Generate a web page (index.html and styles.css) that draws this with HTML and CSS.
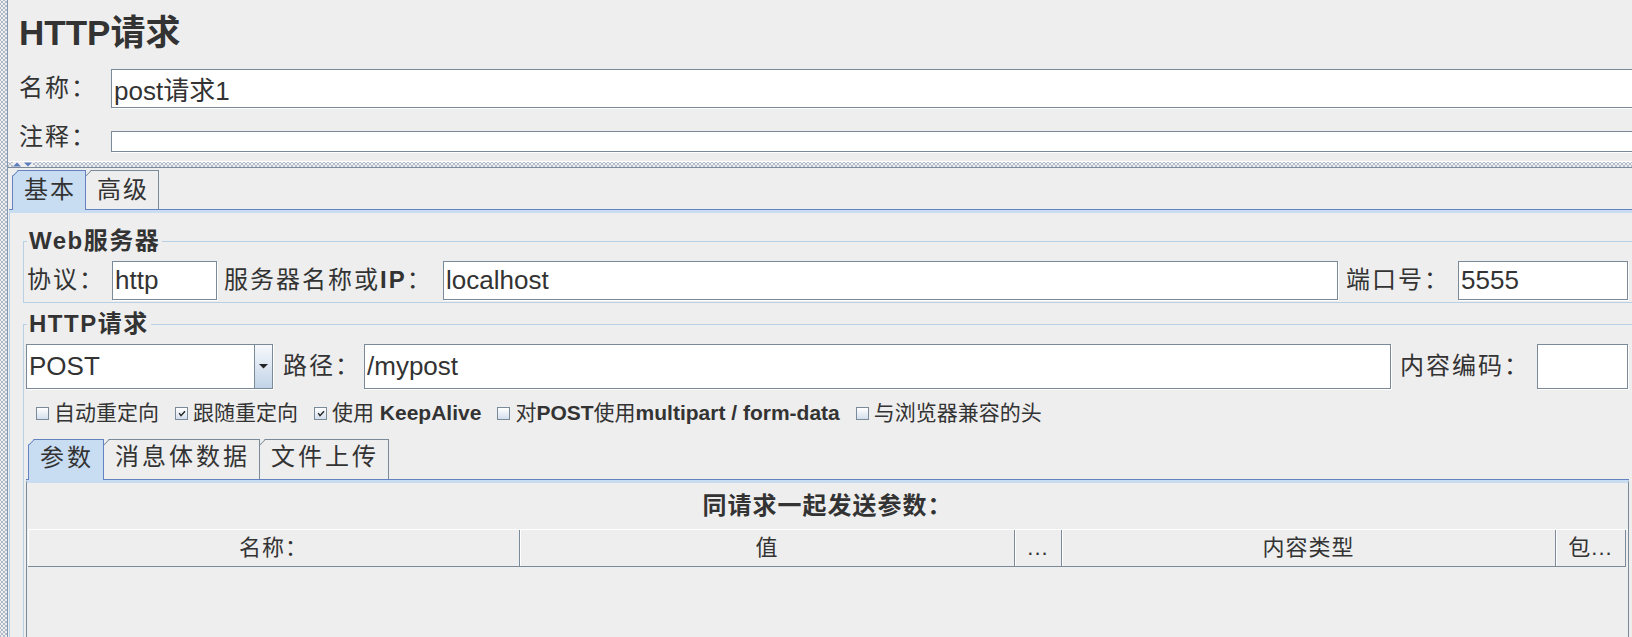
FILE: index.html
```html
<!DOCTYPE html>
<html lang="zh-CN">
<head>
<meta charset="utf-8">
<title>HTTP请求</title>
<link rel="stylesheet" href="styles.css">
</head>
<body>
<div class="app">
  <div class="vsplit"></div>
  <div class="main">
    <div class="head">
      <h1 class="title">HTTP请求</h1>
      <div class="frow name-row">
        <label class="flabel">名称：</label>
        <input class="tf tf-wide" value="post请求1">
      </div>
      <div class="frow comment-row">
        <label class="flabel flabel-up">注释：</label>
        <input class="tf tf-wide" value="">
      </div>
    </div>

    <div class="hsplit">
      <svg class="split-arrows" width="20" height="5" viewBox="0 0 20 5">
        <polygon points="0,4.5 4,0.5 8,4.5" fill="#5b7dbd"/>
        <polygon points="11,0.5 19,0.5 15,4.5" fill="#5b7dbd"/>
      </svg>
    </div>

    <div class="tabs outer-tabs">
      <div class="tab sel">基本</div>
      <div class="tab">高级</div>
    </div>

    <div class="tabpanel">
      <fieldset class="group">
        <legend class="legend">Web服务器</legend>
        <div class="frow row39">
          <span class="lbl w-proto">协议：</span>
          <input class="tf w-http" value="http">
          <span class="lbl w-server">服务器名称或<b class="b">IP</b>：</span>
          <input class="tf tf-wide" value="localhost">
          <span class="lbl w-port">端口号：</span>
          <input class="tf w-portin" value="5555">
        </div>
      </fieldset>

      <fieldset class="group group-http">
        <legend class="legend">HTTP请求</legend>
        <div class="frow row45">
          <div class="combo">
            <div class="combo-val">POST</div>
            <div class="combo-btn">
              <svg width="9" height="5" viewBox="0 0 9 5"><polygon points="0,0 9,0 4.5,4.5" fill="#222"/></svg>
            </div>
          </div>
          <span class="lbl w-path">路径：</span>
          <input class="tf tf-wide" value="/mypost">
          <span class="lbl w-enc">内容编码：</span>
          <input class="tf w-encin" value="">
        </div>

        <div class="checks">
          <span class="chk"><span class="box"></span><span class="chk-text">自动重定向</span></span>
          <span class="chk"><span class="box"><svg width="10" height="10" viewBox="0 0 10 10"><path d="M2.2 5.2 L4 7.6 L8 3.2" fill="none" stroke="#222" stroke-width="1.4"/></svg></span><span class="chk-text">跟随重定向</span></span>
          <span class="chk"><span class="box"><svg width="10" height="10" viewBox="0 0 10 10"><path d="M2.2 5.2 L4 7.6 L8 3.2" fill="none" stroke="#222" stroke-width="1.4"/></svg></span><span class="chk-text">使用 <b class="b">KeepAlive</b></span></span>
          <span class="chk"><span class="box"></span><span class="chk-text">对<b class="b">POST</b>使用<b class="b">multipart / form-data</b></span></span>
          <span class="chk"><span class="box"></span><span class="chk-text">与浏览器兼容的头</span></span>
        </div>

        <div class="tabs inner-tabs">
          <div class="tab sel">参数</div>
          <div class="tab">消息体数据</div>
          <div class="tab">文件上传</div>
        </div>

        <div class="ipanel">
          <div class="ptitle">同请求一起发送参数：</div>
          <div class="thead">
            <div class="th">名称：</div>
            <div class="th">值</div>
            <div class="th">...</div>
            <div class="th">内容类型</div>
            <div class="th">包...</div>
          </div>
        </div>
      </fieldset>
    </div>
  </div>
</div>
</body>
</html>
```

FILE: styles.css
```css
* { box-sizing: border-box; }

html, body {
  margin: 0;
  height: 100%;
  overflow: hidden;
  background: #eeeeee;
}

body {
  font-family: "Liberation Sans", "Noto Sans CJK SC", sans-serif;
  color: #333333;
  line-height: 1.2;
}

.app {
  display: flex;
  width: 1650px;
  height: 637px;
}

.vsplit {
  width: 8px;
  flex: none;
  border-right: 1px solid #8396b2;
  background-color: #eeeeee;
  background-image:
    radial-gradient(circle, #8d9db5 0.6px, transparent 0.9px),
    radial-gradient(circle, #8d9db5 0.6px, transparent 0.9px);
  background-size: 4px 4px;
  background-position: 0 0, 2px 2px;
}

.main {
  flex: 1;
  min-width: 0;
  display: flex;
  flex-direction: column;
}

/* ---------- header ---------- */
.head { padding-left: 11px; }

.title {
  margin: 14px 0 0;
  height: 38px;
  font-size: 35px;
  line-height: 38px;
  font-weight: 700;
  color: #333333;
}

.frow {
  display: flex;
  align-items: center;
}

.name-row { margin-top: 17px; height: 39px; }
.comment-row { margin-top: 23px; height: 21px; }

.flabel {
  width: 92px;
  flex: none;
  font-size: 24px;
  letter-spacing: 2px;
  white-space: nowrap;
}

.flabel-up { margin-bottom: 9px; }

.tf {
  height: 100%;
  margin: 0;
  padding: 0 0 0 2px;
  border: 1px solid #7a8a99;
  background: #ffffff;
  box-shadow: 1px 1px 0 #ffffff;
  font-family: "Liberation Sans", "Noto Sans CJK SC", sans-serif;
  font-size: 26px;
  color: #333333;
  outline: none;
  min-width: 0;
}

.tf-wide { flex: 1 1 0; width: 0; }

/* ---------- split divider ---------- */
.hsplit {
  margin-top: 9px;
  height: 10px;
  border-top: 1px solid #ffffff;
  border-bottom: 1px solid #7a8a99;
  padding-left: 5px;
  display: flex;
  align-items: center;
  background-color: #eeeeee;
  background-image:
    radial-gradient(circle, #95a4ba 0.6px, transparent 0.9px),
    radial-gradient(circle, #95a4ba 0.6px, transparent 0.9px);
  background-size: 4px 4px;
  background-position: 0 0, 2px 2px;
}

.split-arrows { display: block; background: #eeeeee; }

/* ---------- tabs ---------- */
.tabs {
  display: flex;
  align-items: flex-end;
  border-bottom: 1px solid #6382bf;
}

.outer-tabs {
  margin: 2px 0 0 1px;
  height: 40px;
  padding-left: 3px;
}

.inner-tabs {
  margin: 13px -1px 0 -1px;
  height: 41px;
  padding-left: 2px;
}

.tab {
  position: relative;
  height: 39px;
  padding: 0 9px 0 11px;
  display: flex;
  align-items: center;
  font-size: 24px;
  letter-spacing: 2px;
  white-space: nowrap;
  border: 1px solid #7a8a99;
  border-bottom: none;
  margin-right: -1px;
  clip-path: polygon(6px 0, 100% 0, 100% 100%, 0 100%, 0 6px);
}

.tab::before {
  content: "";
  position: absolute;
  left: -1px;
  top: 5px;
  width: 8.5px;
  height: 1px;
  background: #7a8a99;
  transform-origin: 0 0;
  transform: rotate(-45deg);
}

.tab.sel {
  background: #c8ddf2;
  border-color: #6382bf;
  height: 40px;
  margin-bottom: -1px;
  z-index: 1;
}

.tab.sel::before { background: #6382bf; }

.inner-tabs .tab {
  height: 40px;
  padding-bottom: 4px;
  letter-spacing: 3px;
}

.inner-tabs .tab.sel { height: 41px; }

.tabpanel {
  flex: 1;
  margin-left: 1px;
  border-top: 3px solid #c8ddf2;
  border-left: 1px solid #b8cfe5;
}

/* ---------- titled groups ---------- */
.group {
  min-inline-size: 0;
  margin: 15px 15px 0 13px;
  padding: 7px 6px 2px 3px;
  border: 1px solid #b8cfe5;
}

.group-http { margin-top: 8px; }

.legend {
  padding: 0 2px;
  font-size: 24px;
  line-height: 26px;
  font-weight: 700;
  letter-spacing: 1.5px;
  color: #333333;
}

.row39 { height: 39px; }
.row45 { height: 45px; }

.lbl {
  flex: none;
  font-size: 24px;
  letter-spacing: 2px;
  white-space: nowrap;
}

.b { font-weight: 700; }

.w-proto { width: 85px; }
.w-http { width: 105px; flex: none; }
.w-server { width: 219px; margin-left: 7px; }
.w-port { width: 112px; margin-left: 8px; }
.w-portin { width: 170px; flex: none; }
.w-path { width: 81px; margin-left: 10px; }
.w-enc { width: 137px; margin-left: 9px; }
.w-encin { width: 91px; flex: none; }

/* ---------- combo box ---------- */
.combo {
  width: 247px;
  height: 45px;
  flex: none;
  margin-left: -1px;
  display: flex;
  border: 1px solid #7a8a99;
  background: #ffffff;
  box-shadow: 1px 1px 0 #ffffff;
}

.combo-val {
  flex: 1;
  display: flex;
  align-items: center;
  padding-left: 2px;
  font-size: 26px;
}

.combo-btn {
  width: 18px;
  flex: none;
  border-left: 1px solid #7a8a99;
  background: linear-gradient(#f6f8fb, #dfe8f3 45%, #c2d3e7);
  display: flex;
  align-items: center;
  justify-content: center;
}

.combo-btn svg { display: block; }

/* ---------- checkboxes ---------- */
.checks {
  display: flex;
  align-items: center;
  height: 26px;
  margin-top: 11px;
  padding-left: 9px;
  font-size: 21px;
}

.chk {
  display: flex;
  align-items: center;
  margin-right: 16px;
  white-space: nowrap;
}

.chk-text { white-space: pre; }

.box {
  width: 13px;
  height: 13px;
  flex: none;
  margin-right: 5px;
  border: 1px solid #7a8a99;
  background: linear-gradient(#ffffff, #d3deec);
  display: flex;
  align-items: center;
  justify-content: center;
}

.box svg { display: block; }

/* ---------- inner panel ---------- */
.ipanel {
  margin: 0 -1px;
  height: 220px;
  border-top: 3px solid #c8ddf2;
  border-left: 1px solid #7a8a99;
  border-right: 1px solid #7a8a99;
}

.ptitle {
  height: 46px;
  line-height: 46px;
  text-align: center;
  font-size: 24px;
  font-weight: 700;
  letter-spacing: 1px;
}

.thead {
  display: grid;
  grid-template-columns: 492px 495px 47px 494px 70px;
  height: 38px;
  margin-left: 1px;
  border-top: 1px solid #ffffff;
}

.th {
  display: flex;
  align-items: center;
  justify-content: center;
  border-right: 1px solid #7a8a99;
  border-bottom: 1px solid #7a8a99;
  box-shadow: inset 1px 0 #ffffff;
  font-size: 22px;
  letter-spacing: 1px;
  white-space: nowrap;
}
```
